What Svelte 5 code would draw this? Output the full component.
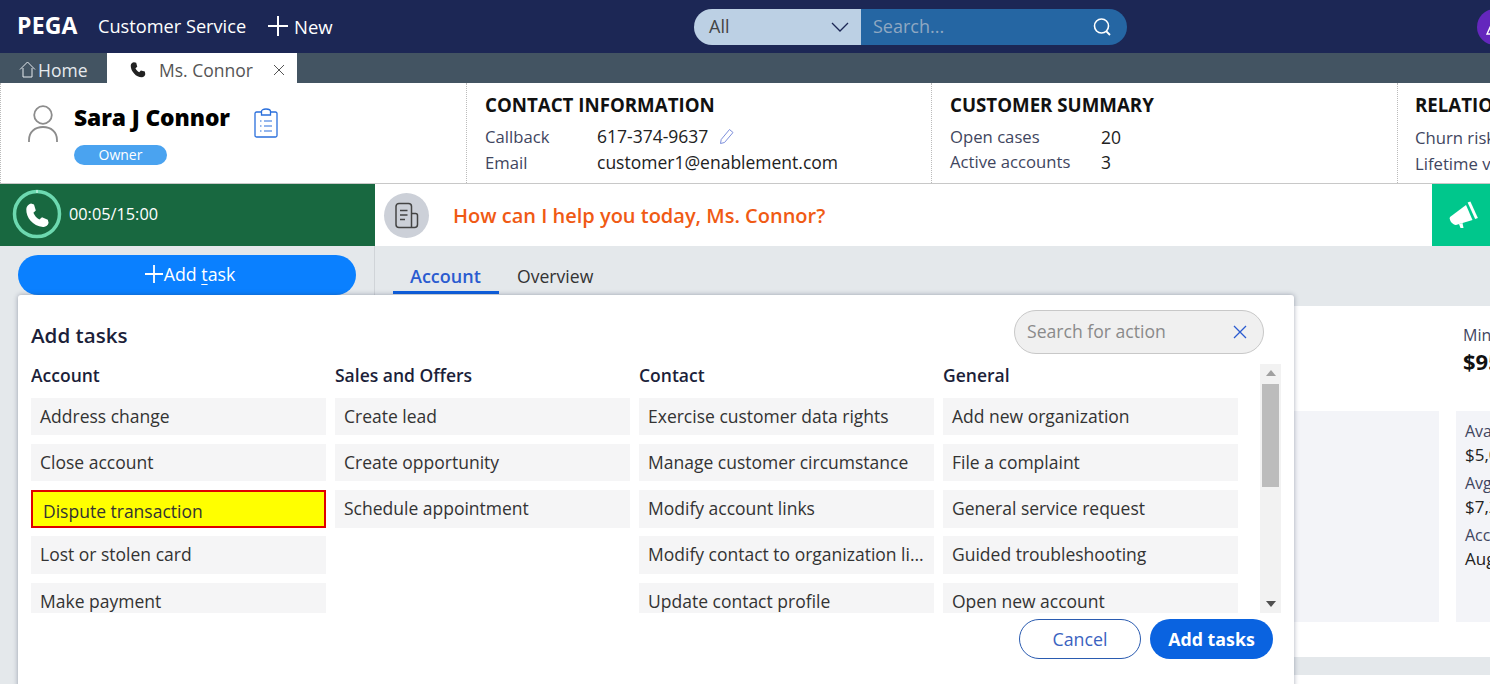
<script>
  const columns = [
    { title: 'Account', items: ['Address change', 'Close account', 'Dispute transaction', 'Lost or stolen card', 'Make payment'] },
    { title: 'Sales and Offers', items: ['Create lead', 'Create opportunity', 'Schedule appointment'] },
    { title: 'Contact', items: ['Exercise customer data rights', 'Manage customer circumstance', 'Modify account links', 'Modify contact to organization link', 'Update contact profile'] },
    { title: 'General', items: ['Add new organization', 'File a complaint', 'General service request', 'Guided troubleshooting', 'Open new account'] }
  ];
</script>

<div class="page">
  <header class="topbar">
    <span class="logo">PEGA</span>
    <span class="app">Customer Service</span>
    <span class="new">
      <svg width="20" height="22" viewBox="0 0 20 22"><path d="M10 1v20M0 11h20" stroke="#fff" stroke-width="2" fill="none"/></svg>
      New
    </span>
    <div class="search">
      <div class="scope">
        <span>All</span>
        <svg width="18" height="10" viewBox="0 0 18 10"><path d="M1 1l8 8 8-8" stroke="#1c2755" stroke-width="1.300" fill="none"/></svg>
      </div>
      <div class="query">
        <span>Search...</span>
        <svg width="20" height="20" viewBox="0 0 20 20"><circle cx="9.500" cy="9" r="7" stroke="#fff" stroke-width="1.600" fill="none"/><path d="M14 14l4 4" stroke="#fff" stroke-width="1.800" fill="none"/></svg>
      </div>
    </div>
    <div class="avatar">
      <svg width="18" height="18" viewBox="0 0 18 18"><path d="M1 16L7 3l5 13z" stroke="#fff" stroke-width="1.400" fill="none"/></svg>
    </div>
  </header>

  <nav class="tabbar">
    <div class="tab-home">
      <svg width="17" height="17" viewBox="0 0 17 17"><path d="M1 8.500L8.500 1 16 8.500M4 7v9h9V7" stroke="#e6eaee" stroke-width="1" fill="none"/></svg>
      Home
    </div>
    <div class="tab-active">
      <svg width="18" height="18" viewBox="0 0 24 24"><path d="M6.600 1.800l3 .6 1.400 5.200-2.400 2.100c1 2.400 2.700 4.100 5 5.300l2.300-2.300 5.200 1.400.6 3.200c0 2-2.200 4.400-4.700 4.400C9.500 21.700 2.300 13.500 2.300 6.200c0-2.300 2.300-4.400 4.300-4.400z" fill="#222"/></svg>
      <span class="tab-name">Ms. Connor</span>
      <svg class="tab-x" width="12" height="12" viewBox="0 0 12 12"><path d="M1 1l10 10M11 1L1 11" stroke="#555" stroke-width="1" fill="none"/></svg>
    </div>
  </nav>

  <section class="customer">
    <div class="identity">
      <svg class="person" width="30" height="38" viewBox="0 0 30 38"><circle cx="15" cy="10" r="8.800" stroke="#8c8c8c" stroke-width="1.800" fill="none"/><path d="M1 37v-2C1 27 7 22 15 22s14 5 14 13v2" stroke="#8c8c8c" stroke-width="1.800" fill="none"/></svg>
      <div class="who">
        <div class="name-row">
          <h1>Sara J Connor</h1>
          <svg width="24" height="30" viewBox="0 0 24 30"><path d="M7.500 4H2.500a1.500 1.500 0 0 0-1.500 1.500v22A1.500 1.500 0 0 0 2.500 29h19a1.500 1.500 0 0 0 1.500-1.500v-22A1.500 1.500 0 0 0 21.500 4h-5" stroke="#2a6fdc" stroke-width="1.300" fill="none"/><path d="M7.500 7V3.500C7.500 2 9 1 12 1s4.500 1 4.500 2.500V7z" stroke="#2a6fdc" stroke-width="1.300" fill="none"/><path d="M6 13h1.500M10 13h8M6 18h1.500M10 18h8M6 23h1.500M10 23h8" stroke="#2a6fdc" stroke-width="1.100" fill="none"/></svg>
        </div>
        <span class="badge">Owner</span>
      </div>
    </div>
    <div class="info contact">
      <h2>CONTACT INFORMATION</h2>
      <div class="row"><span class="k">Callback</span><span class="v">617-374-9637</span>
        <svg class="pen" width="16" height="17" viewBox="0 0 16 17"><path d="M1.500 15.500l.7-4L10.500 1.500l3.500 3-8.500 10z" stroke="#7d8fdc" stroke-width="1" fill="none"/></svg>
      </div>
      <div class="row"><span class="k">Email</span><span class="v">customer1@enablement.com</span></div>
    </div>
    <div class="info summary">
      <h2>CUSTOMER SUMMARY</h2>
      <div class="row"><span class="k">Open cases</span><span class="v">20</span></div>
      <div class="row"><span class="k">Active accounts</span><span class="v">3</span></div>
    </div>
    <div class="info relation">
      <h2>RELATIONSHIP</h2>
      <div class="row"><span class="k">Churn risk</span></div>
      <div class="row"><span class="k">Lifetime value</span></div>
    </div>
  </section>

  <div class="work">
    <aside class="left">
      <div class="callbar">
        <svg class="ring" width="50" height="50" viewBox="0 0 50 50">
          <circle cx="25" cy="25" r="22.500" stroke="#6dd9b0" stroke-width="3.500" fill="none"/>
          <path d="M25 1v3" stroke="#e8fff5" stroke-width="1" fill="none"/>
          <path d="M19 14.500l3 1 1.800 6-2.400 2.300c1.200 3 3.200 5.200 6 6.800l2.600-2.300 5.800 2.500.8 3c-.5 2.800-3.200 4.500-5.600 4.100C20.500 37 14 28.500 14.300 20c.2-2.700 2.300-5.100 4.700-5.500z" fill="#fff"/>
        </svg>
        <span class="time">00:05/15:00</span>
      </div>
      <button class="addtask">
        <svg width="18" height="18" viewBox="0 0 18 18"><path d="M9 0v18M0 9h18" stroke="#fff" stroke-width="1.800" fill="none"/></svg>
        <span>Add <u>t</u>ask</span>
      </button>
    </aside>

    <main class="right">
      <div class="scriptbar">
        <span class="doc">
          <svg width="26" height="27" viewBox="0 0 26 27"><path d="M17.500 25.500H5a3 3 0 0 1-3-3V4.500a3 3 0 0 1 3-3h9.500a3 3 0 0 1 3 3v21h3a3 3 0 0 0 3-3V13.500a2 2 0 0 0-2-2h-4" stroke="#444" stroke-width="1.500" fill="none"/><path d="M6 8.500h7.500M6 13h7.500M6 17.500h5" stroke="#444" stroke-width="1.500" fill="none"/></svg>
        </span>
        <span class="greet">How can I help you today, Ms. Connor?</span>
        <span class="horn">
          <svg width="30" height="28" viewBox="0 0 30 28"><path d="M1 16L17 4l6.500 15L7 24c-3 .5-7.500-5-6-8z" fill="#fff"/><path d="M20 1l7.500 16.500" stroke="#fff" stroke-width="3" fill="none"/><path d="M10 23l1.500 4h3l-1-5" fill="#fff"/></svg>
        </span>
      </div>
      <div class="subtabs">
        <span class="sub on">Account</span>
        <span class="sub">Overview</span>
      </div>
      <div class="panel">
        <div class="mins">
          <div class="min-l">Minimum payment</div>
          <div class="min-v">$95.00</div>
        </div>
        <div class="boxes">
          <div class="box b1"></div>
          <div class="box b2">
            <div>Available credit</div><div class="d">$5,000.00</div>
            <div>Avg monthly spend</div><div class="d">$7,200.00</div>
            <div>Account opened</div><div class="d">August 2015</div>
          </div>
        </div>
      </div>
      <div class="strip"></div>
      <div class="rest"></div>
    </main>
  </div>

  <div class="modal">
    <div class="modal-head">
      <h3>Add tasks</h3>
      <div class="find">
        <span>Search for action</span>
        <svg width="14" height="14" viewBox="0 0 14 14"><path d="M1 1l12 12M13 1L1 13" stroke="#2a5bd0" stroke-width="1.300" fill="none"/></svg>
      </div>
    </div>
    <div class="list-wrap">
      <div class="list">
        {#each columns as col}
          <div class="col">
            <h4>{col.title}</h4>
            {#each col.items as item}
              <div class="item" class:flag={item === 'Dispute transaction'}><span>{item}</span></div>
            {/each}
          </div>
        {/each}
      </div>
      <div class="scroll">
        <svg class="arrow" width="10" height="6" viewBox="0 0 10 6"><path d="M5 0l5 6H0z" fill="#a0a0a0"/></svg>
        <div class="track"><div class="thumb"></div></div>
        <svg class="arrow" width="10" height="6" viewBox="0 0 10 6"><path d="M0 0h10L5 6z" fill="#505050"/></svg>
      </div>
    </div>
    <div class="actions">
      <button class="cancel">Cancel</button>
      <button class="submit">Add tasks</button>
    </div>
  </div>
</div>

<style>
  :global(body) { margin: 0; }
  .page {
    position: relative;
    width: 1490px;
    height: 684px;
    overflow: hidden;
    background: #fff;
    font-family: "Open Sans", "Noto Sans", sans-serif;
    color: #222;
    display: flex;
    flex-direction: column;
  }
  svg { display: block; flex: none; }

  .topbar {
    height: 53px;
    background: #1c2755;
    color: #fff;
    display: flex;
    align-items: center;
    padding-left: 17px;
    flex: none;
    position: relative;
  }
  .logo { font: 700 23px/1 "Open Sans", sans-serif; letter-spacing: 0.2px; width: 81px; padding-bottom: 2px; }
  .app { font-size: 18.200px; width: 170px; padding-bottom: 2px; }
  .new { font-size: 18.500px; display: flex; align-items: center; gap: 6px; width: 65px; padding-bottom: 1px; }
  .search {
    margin-left: 361px;
    display: flex;
    height: 36px;
    width: 433px;
    border-radius: 18px;
    overflow: hidden;
    font-size: 18px;
  }
  .scope {
    width: 167px;
    background: #bcd0e4;
    color: #444;
    display: flex;
    align-items: center;
    justify-content: space-between;
    padding: 0 12px 0 15px;
    box-sizing: border-box;
  }
  .query {
    flex: 1;
    background: #2566a3;
    color: #8fa8c2;
    display: flex;
    align-items: center;
    justify-content: space-between;
    padding: 0 15px 0 12px;
  }
  .scope span, .query span { padding-bottom: 2px; }
  .avatar {
    position: absolute;
    left: 1477px;
    top: 9px;
    width: 36px;
    height: 36px;
    border-radius: 50%;
    background: #6427bd;
    display: flex;
    align-items: center;
    justify-content: center;
  }

  .tabbar {
    height: 30px;
    background: #435462;
    display: flex;
    flex: none;
    font-size: 17.500px;
    line-height: 30px;
  }
  .tab-home {
    width: 107px;
    color: #e6eaee;
    display: flex;
    align-items: center;
    gap: 2px;
    padding: 3px 0 0 19px;
    box-sizing: border-box;
  }
  .tab-active {
    width: 190px;
    background: #fff;
    color: #555;
    display: flex;
    align-items: center;
    padding: 3px 0 0 22px;
    box-sizing: border-box;
  }
  .tab-name { margin-left: 12px; }
  .tab-x { margin-left: 20px; }

  .customer {
    height: 100px;
    border-bottom: 1px solid #c8c8c8;
    display: flex;
    flex: none;
  }
  .identity {
    width: 466px;
    border-left: 1px dotted #bbb;
    box-sizing: border-box;
    display: flex;
    padding: 22px 0 0 27px;
    gap: 16px;
  }
  .name-row { display: flex; align-items: center; gap: 24px; height: 40px; margin-top: -7px; }
  h1 { margin: 0; font-size: 22.800px; font-weight: 800; color: #000; line-height: 40px; letter-spacing: -0.1px; }
  .name-row svg { margin-top: 9px; }
  .badge {
    display: block;
    width: 93px;
    height: 20px;
    margin-top: 7px;
    border-radius: 10px;
    background: #4aa3f0;
    color: #fff;
    font-size: 14px;
    line-height: 20px;
    text-align: center;
  }
  .info {
    border-left: 1px dotted #bbb;
    box-sizing: border-box;
    padding: 9px 0 0 18px;
    overflow: hidden;
    white-space: nowrap;
  }
  .contact { width: 465px; }
  .summary { width: 466px; }
  .relation { flex: 1; padding-left: 17px; }
  h2 { margin: 0 0 5px; font-size: 18.700px; font-weight: 700; line-height: 26px; color: #111; }
  .summary h2, .relation h2 { margin-bottom: 6px; }
  .row { display: flex; align-items: center; height: 26px; font-size: 16.700px; }
  .contact .row .k { width: 112px; }
  .summary .row .k { width: 151px; }
  .k { color: #3f4660; font-weight: 500; }
  .v { color: #222; font-size: 17.500px; }
  .summary .row { height: 25px; }
  .pen { margin-left: 11px; }

  .work { flex: 1; display: flex; min-height: 0; background: #e4e8eb; position: relative; }
  .left { width: 375px; flex: none; border-right: 1px solid #d0d4d8; box-sizing: border-box; }
  .callbar {
    height: 62px;
    background: #186840;
    display: flex;
    align-items: center;
    padding-left: 12px;
    gap: 7px;
    margin-right: -1px;
  }
  .ring { margin-bottom: 2px; }
  .time { color: #fff; font-size: 16.300px; padding-bottom: 2px; }
  .addtask {
    display: flex;
    align-items: center;
    justify-content: center;
    gap: 1px;
    margin: 9px 0 0 18px;
    width: 338px;
    height: 40px;
    border: 0;
    border-radius: 20px;
    background: #0a80ff;
    color: #fff;
    font: 17.800px "Open Sans", sans-serif;
    padding: 0 0 2px 6px;
  }
  u { text-underline-offset: 3px; text-decoration-thickness: 1px; }

  .right { flex: 1; min-width: 0; display: flex; flex-direction: column; background: #e4e8eb; }
  .scriptbar {
    height: 62px;
    background: #fff;
    display: flex;
    align-items: center;
    padding-left: 9px;
    flex: none;
  }
  .doc {
    width: 45px;
    height: 45px;
    border-radius: 50%;
    background: #ccd0d8;
    display: flex;
    align-items: center;
    justify-content: center;
  }
  .greet { margin-left: 24px; font-size: 20px; font-weight: 600; color: #f05a14; }
  .horn {
    margin-left: auto;
    width: 58px;
    height: 62px;
    background: #00c78c;
    display: flex;
    align-items: center;
    justify-content: center;
    padding-left: 6px;
    box-sizing: border-box;
  }
  .subtabs {
    height: 60px;
    flex: none;
    display: flex;
    padding-left: 18px;
    box-sizing: border-box;
    font-size: 17.600px;
  }
  .sub { padding: 15px 18px 0 17px; height: 48px; box-sizing: border-box; line-height: 30px; color: #333; }
  .sub.on { font-weight: 600; color: #2a5bd0; border-bottom: 3px solid #0d5fe0; width: 106px; padding-right: 0; font-size: 18px; }
  .sub.on + .sub { padding-left: 18px; }
  .panel {
    height: 351px;
    flex: none;
    background: #fff;
    box-sizing: border-box;
    padding: 18px 0 0 1088px;
    display: flex;
    flex-direction: column;
    overflow: hidden;
    white-space: nowrap;
  }
  .min-l { font-size: 16px; color: #3f4660; line-height: 22px; }
  .min-v { font-size: 22px; font-weight: 700; color: #111; line-height: 30px; }
  .boxes { display: flex; gap: 17px; margin: 35px 0 0 -169px; height: 211px; }
  .box { background: #f3f4f8; flex: none; }
  .b1 { width: 145px; }
  .b2 { width: 300px; padding: 8px 0 0 9px; font-size: 16px; color: #3f4660; line-height: 24px; }
  .b2 .d { color: #222; font-size: 17px; margin-bottom: 4px; }
  .strip { height: 18px; background: #e4e8eb; flex: none; }
  .rest { flex: 1; background: #fff; }

  .modal {
    position: absolute;
    left: 18px;
    top: 295px;
    width: 1276px;
    height: 400px;
    background: #fff;
    border-radius: 3px;
    box-shadow: 0 0 5px rgba(40, 50, 80, 0.4);
    box-sizing: border-box;
    padding: 15px 13px 0;
  }
  .modal-head { display: flex; justify-content: space-between; height: 44px; padding-right: 17px; }
  h3 { margin: 10px 0 0; font-size: 20.600px; font-weight: 600; color: #1c1f3a; line-height: 30px; }
  .find {
    width: 250px;
    height: 44px;
    border: 1px solid #c8c8c8;
    border-radius: 22px;
    background: #f0f0f0;
    box-sizing: border-box;
    display: flex;
    align-items: center;
    justify-content: space-between;
    padding: 0 16px 2px 12px;
    color: #8a8a8a;
    font-size: 17.600px;
  }
  .find svg { margin-top: 2px; }
  .list-wrap { display: flex; margin-top: 10px; height: 249px; }
  .list {
    width: 1229px;
    height: 249px;
    overflow: hidden;
    display: grid;
    grid-template-columns: repeat(4, 295px);
    column-gap: 9px;
    align-content: start;
  }
  h4 { margin: 0 0 11px; font-size: 17.500px; font-weight: 600; color: #1c1f3a; line-height: 23px; }
  .item {
    height: 37px;
    margin-bottom: 9px;
    background: #f5f5f6;
    color: #333;
    font-size: 17.500px;
    line-height: 37px;
    padding: 0 9px;
    box-sizing: border-box;
    white-space: nowrap;
    overflow: hidden;
    text-overflow: ellipsis;
  }
  .item:nth-child(4) { height: 38px; margin-bottom: 8px; }
  .item:nth-child(5) { height: 38px; }
  .item.flag {
    background: #ff0;
    border: 2px solid #e00000;
    padding: 2px 10px 0;
    line-height: 34px;
  }
  .scroll {
    width: 21px;
    background: #f2f2f2;
    display: flex;
    flex-direction: column;
    align-items: center;
    padding: 6px 0;
    box-sizing: border-box;
    justify-content: space-between;
  }
  .track { flex: 1; width: 17px; margin: 8px 0 8px; }
  .thumb { height: 103px; background: #bcbcbc; }
  .actions {
    position: absolute;
    right: 21px;
    top: 324px;
    display: flex;
    gap: 9px;
  }
  .actions button { height: 40px; border-radius: 20px; font: 17.800px "Open Sans", sans-serif; }
  .cancel { width: 122px; background: #fff; border: 1px solid #2a5bb0; color: #3a62c0; }
  .actions .submit { width: 123px; background: #0a63e0; border: 0; color: #fff; font-weight: 700; }
</style>
